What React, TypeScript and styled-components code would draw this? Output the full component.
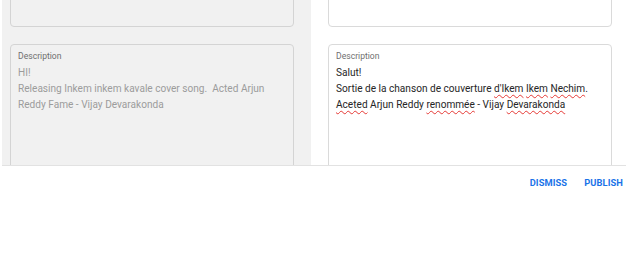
import React from "react";
import styled, { createGlobalStyle } from "styled-components";

const GlobalStyle = createGlobalStyle`
  html, body {
    margin: 0;
    padding: 0;
    background: #fff;
    font-family: Roboto, "Noto Sans", Arial, sans-serif;
  }
`;

const Dialog = styled.div`
  width: 628px;
  height: 274px;
  box-sizing: border-box;
  padding: 0 2px;
  overflow: hidden;
`;

const Body = styled.div`
  display: grid;
  grid-template-columns: 309px 1fr;
  height: 165px;
  overflow: hidden;
  border-bottom: 1px solid #e2e2e2;
`;

const Column = styled.div<{ $source?: boolean }>`
  display: flex;
  flex-direction: column;
  gap: 17px;
  background: ${p => (p.$source ? "#f1f1f1" : "#fff")};
  padding: ${p => (p.$source ? "0 17px 0 8px" : "0 14px 0 17px")};
  margin-top: -33px;
`;

const Card = styled.div<{ $source?: boolean; $h: number }>`
  box-sizing: border-box;
  height: ${p => p.$h}px;
  flex-shrink: 0;
  border: 1px solid ${p => (p.$source ? "#d4d4d4" : "#dadada")};
  border-radius: 4px;
  background: ${p => (p.$source ? "#f1f1f1" : "#fff")};
  padding: 5px 7px;
`;

const Label = styled.div`
  font-size: 8.6px;
  line-height: 12px;
  color: #6f6f6f;
  margin-bottom: 3px;
`;

const Text = styled.div<{ $source?: boolean }>`
  font-size: 10.1px;
  line-height: 16px;
  color: ${p => (p.$source ? "#9c9c9c" : "#262626")};
  white-space: pre-wrap;
`;

const Misspelled = styled.span`
  text-decoration: underline wavy #e53935;
  text-decoration-thickness: 1px;
  text-underline-offset: 2px;
`;

const Footer = styled.div`
  display: flex;
  justify-content: flex-end;
  gap: 17px;
  padding: 11px 3px 0 0;
`;

const Button = styled.button`
  border: none;
  background: none;
  padding: 0;
  font-family: Roboto, Arial, sans-serif;
  font-size: 9.3px;
  font-weight: 700;
  line-height: 12px;
  letter-spacing: 0.1px;
  color: #1a73e8;
  cursor: pointer;
`;

export default function App() {
  return (
    <>
      <GlobalStyle />
      <Dialog>
        <Body>
          <Column $source>
            <Card $source $h={60} />
            <Card $source $h={160}>
              <Label>Description</Label>
              <Text $source>
                {"HI!\nReleasing Inkem inkem kavale cover song.  Acted Arjun Reddy Fame - Vijay Devarakonda"}
              </Text>
            </Card>
          </Column>
          <Column>
            <Card $h={60} />
            <Card $h={160}>
              <Label>Description</Label>
              <Text>
                Salut!
                <br />
                Sortie de la chanson de couverture <Misspelled>d'Ikem</Misspelled>{" "}
                <Misspelled>Ikem</Misspelled> <Misspelled>Nechim</Misspelled>.{" "}
                <Misspelled>Aceted</Misspelled> Arjun Reddy <Misspelled>renommée</Misspelled> - Vijay{" "}
                <Misspelled>Devarakonda</Misspelled>
              </Text>
            </Card>
          </Column>
        </Body>
        <Footer>
          <Button>DISMISS</Button>
          <Button>PUBLISH</Button>
        </Footer>
      </Dialog>
    </>
  );
}
